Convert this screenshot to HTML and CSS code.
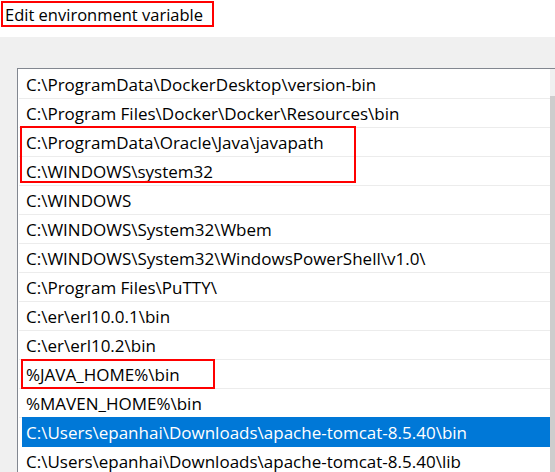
FILE: index.html
```html
<!DOCTYPE html>
<html>
<head>
<meta charset="utf-8">
<link rel="stylesheet" href="styles.css">
</head>
<body>
<div class="header"><span class="title">Edit environment variable</span></div>
<div class="panel">
  <div class="listbox">
    <div class="rows">
      <div class="row">C:\ProgramData\DockerDesktop\version-bin</div>
      <div class="row">C:\Program Files\Docker\Docker\Resources\bin</div>
      <div class="row">C:\ProgramData\Oracle\Java\javapath</div>
      <div class="row">C:\WINDOWS\system32</div>
      <div class="row">C:\WINDOWS</div>
      <div class="row">C:\WINDOWS\System32\Wbem</div>
      <div class="row">C:\WINDOWS\System32\WindowsPowerShell\v1.0\</div>
      <div class="row">C:\Program Files\PuTTY\</div>
      <div class="row">C:\er\erl10.0.1\bin</div>
      <div class="row">C:\er\erl10.2\bin</div>
      <div class="row">%JAVA_HOME%\bin</div>
      <div class="row">%MAVEN_HOME%\bin</div>
      <div class="row selected">C:\Users\epanhai\Downloads\apache-tomcat-8.5.40\bin</div>
      <div class="row">C:\Users\epanhai\Downloads\apache-tomcat-8.5.40\lib</div>
    </div>
    <div class="scrollbar"><div class="arrow"></div><div class="thumb"></div></div>
    <div class="mark mark-java"></div>
    <div class="mark mark-home"></div>
  </div>
</div>
</body>
</html>
```
FILE: styles.css
```css
html, body {
  margin: 0;
  padding: 0;
  width: 555px;
  height: 472px;
  overflow: hidden;
  background: #ffffff;
  font-family: "Open Sans", "Noto Sans", sans-serif;
  color: #000;
}
.header {
  height: 37px;
  box-sizing: border-box;
  padding: 1px 0 0 1px;
  background: #fff;
}
.title {
  display: inline-block;
  box-sizing: border-box;
  width: 213px;
  height: 26px;
  border: 2px solid #ff0000;
  padding: 1px 0 0 2px;
  font-size: 16.5px;
  line-height: 21px;
  white-space: nowrap;
  color: #000;
}
.panel {
  background: #f0f0f0;
  height: 435px;
  padding: 31px 0 0 17px;
  box-sizing: border-box;
}
.listbox {
  position: relative;
  display: flex;
  width: 537px;
  height: 420px;
  border: 1px solid #828790;
  border-right: none;
  background: #fff;
}
.rows {
  width: 531px;
  padding: 1px 0 0 1px;
  flex: none;
}
.row {
  height: 27px;
  padding: 1px 0 0 7px;
  border-bottom: 1px solid #ececec;
  font-size: 17px;
  line-height: 27px;
  white-space: nowrap;
  overflow: hidden;
}
.row.selected {
  margin-left: 3px;
  padding-left: 4px;
  background: #0078d7;
  color: #fff;
  border-bottom-color: #0078d7;
  box-shadow: 0 -1px 0 #0078d7;
}
.scrollbar {
  flex: 1;
  display: flex;
  flex-direction: column;
  background: #f0f0f0;
}
.arrow {
  height: 27px;
  background: #f0f0f0;
}
.thumb {
  flex: 1;
  background: #cdcdcd;
}
.mark {
  position: absolute;
  box-sizing: border-box;
  border: 2px solid #ff0000;
}
.mark-java {
  left: 2px;
  top: 57px;
  width: 336px;
  height: 57px;
}
.mark-home {
  left: 3px;
  top: 290px;
  width: 194px;
  height: 30px;
}
```
